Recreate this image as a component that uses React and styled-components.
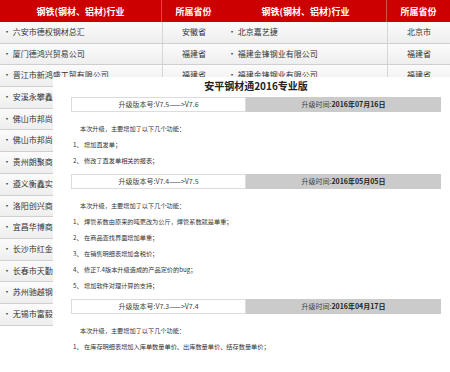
import React from 'react';
import styled, { createGlobalStyle } from 'styled-components';

const GlobalStyle = createGlobalStyle`
  html, body {
    margin: 0;
    padding: 0;
    background: #fff;
    overflow: hidden;
  }
  body {
    font-family: "Noto Sans CJK SC", "Liberation Sans", sans-serif;
    color: #333;
  }
`;

const leftCompanies = [
  ['六安市德权钢材总汇', '安徽省'],
  ['厦门德鸿兴贸易公司', '福建省'],
  ['晋江市新鸿盛工贸有限公司', '福建省'],
  ['安溪永攀鑫贸易有限公司', '福建省'],
  ['佛山市邦尚钢铁有限公司', '广东省'],
  ['佛山市邦尚金属材料有限公司', '广东省'],
  ['贵州朗聚商贸有限公司', '贵州省'],
  ['遵义衡鑫实业有限公司', '贵州省'],
  ['洛阳创兴商贸有限公司', '河南省'],
  ['宜昌华博商贸有限公司', '湖北省'],
  ['长沙市红金钢材有限公司', '湖南省'],
  ['长春市天勤钢材有限公司', '吉林省'],
  ['苏州驰越钢铁有限公司', '江苏省'],
  ['无锡市富毅钢铁有限公司', '江苏省'],
];

const rightCompanies = [
  ['北京嘉艺捷', '北京市'],
  ['福建金锋钢业有限公司', '福建省'],
  ['福建金锋钢业有限公司', '福建省'],
];

const versions = [
  {
    from: 'V7.5',
    to: 'V7.6',
    date: '2016年07月16日',
    items: ['增加直发单；', '修改了直发单相关的报表；'],
  },
  {
    from: 'V7.4',
    to: 'V7.5',
    date: '2016年05月05日',
    items: [
      '焊管系数由原来的吨更改为公斤，焊管系数就是单重；',
      '在商品查找界面增加单重；',
      '在销售明细表增加含税价；',
      '修正7.4版本升级造成的产品定价的bug；',
      '增加软件对理计算的支持；',
    ],
  },
  {
    from: 'V7.3',
    to: 'V7.4',
    date: '2016年04月17日',
    items: ['在库存明细表增加入库单数量单价、出库数量单价、结存数量单价；'],
  },
];

const CompanyTable = ({ rows }) => (
  <Panel>
    <HeaderRow>
      <HeaderCell $divider>钢铁(钢材、铝材)行业</HeaderCell>
      <HeaderCell>所属省份</HeaderCell>
    </HeaderRow>
    {rows.map(([name, prov], i) => (
      <Row key={i}>
        <NameCell>{`· ${name}`}</NameCell>
        <ProvCell>{prov}</ProvCell>
      </Row>
    ))}
  </Panel>
);

const App = () => (
  <>
    <GlobalStyle />
    <Page>
      <Tables>
        <CompanyTable rows={leftCompanies} />
        <CompanyTable rows={rightCompanies} />
      </Tables>

      <Dialog>
        <Title>安平钢材通2016专业版</Title>
        {versions.map((v) => (
          <Block key={v.to}>
            <VersionBar>
              <VersionCell>{`升级版本号:${v.from}——>${v.to}`}</VersionCell>
              <TimeCell>
                升级时间:<b>{v.date}</b>
              </TimeCell>
            </VersionBar>
            <Intro>本次升级，主要增加了以下几个功能：</Intro>
            {v.items.map((item, i) => (
              <Item key={i}>{`${i + 1}、 ${item}`}</Item>
            ))}
          </Block>
        ))}
      </Dialog>
    </Page>
  </>
);

const Page = styled.div`
  position: relative;
  width: 450px;
  height: 372px;
  overflow: hidden;
`;

const Tables = styled.div`
  display: flex;
`;

const Panel = styled.div`
  width: 225px;
  flex: none;
`;

const HeaderRow = styled.div`
  display: grid;
  grid-template-columns: 162px 63px;
  height: 22px;
  background: #cc0000;
`;

const HeaderCell = styled.div`
  display: flex;
  align-items: center;
  justify-content: center;
  color: #fff;
  font-size: 9px;
  font-weight: bold;
  border-right: ${(p) => (p.$divider ? '1px solid #d94a4a' : 'none')};
`;

const Row = styled.div`
  display: grid;
  grid-template-columns: 162px 63px;
  height: 20.7px;
  border-bottom: 1px solid #cfcfcf;
  background: linear-gradient(#fbfbfb, #eeeeee);
  font-size: 8px;
  line-height: 20.7px;
`;

const NameCell = styled.div`
  padding-left: 3px;
  white-space: nowrap;
  overflow: hidden;
`;

const ProvCell = styled.div`
  text-align: center;
  border-left: 1px solid #d6d6d6;
`;

const Dialog = styled.div`
  position: absolute;
  left: 53px;
  top: 77px;
  width: 397px;
  bottom: 0;
  background: #fff;
  padding: 0 9px 0 18px;
  box-sizing: border-box;
`;

const Title = styled.div`
  text-align: center;
  font-size: 10px;
  font-weight: bold;
  line-height: 12px;
  padding-top: 3px;
  color: #222;
`;

const Block = styled.div`
  margin-top: 5px;
`;

const VersionBar = styled.div`
  display: grid;
  grid-template-columns: 175px 195px;
  height: 15px;
`;

const VersionCell = styled.div`
  border: 1px solid #dcdcdc;
  font-size: 7px;
  line-height: 13px;
  text-align: center;
  color: #444;
  white-space: nowrap;
`;

const TimeCell = styled.div`
  background: #cbcbcb;
  font-size: 7px;
  line-height: 15px;
  text-align: center;
  color: #444;
  white-space: nowrap;

  b {
    color: #222;
  }
`;

const Intro = styled.div`
  margin-top: 9px;
  padding-left: 9px;
  font-size: 6.2px;
  line-height: 16px;
  white-space: nowrap;
`;

const Item = styled.div`
  padding-left: 2px;
  font-size: 6.2px;
  line-height: 16px;
  white-space: nowrap;
`;

export default App;
